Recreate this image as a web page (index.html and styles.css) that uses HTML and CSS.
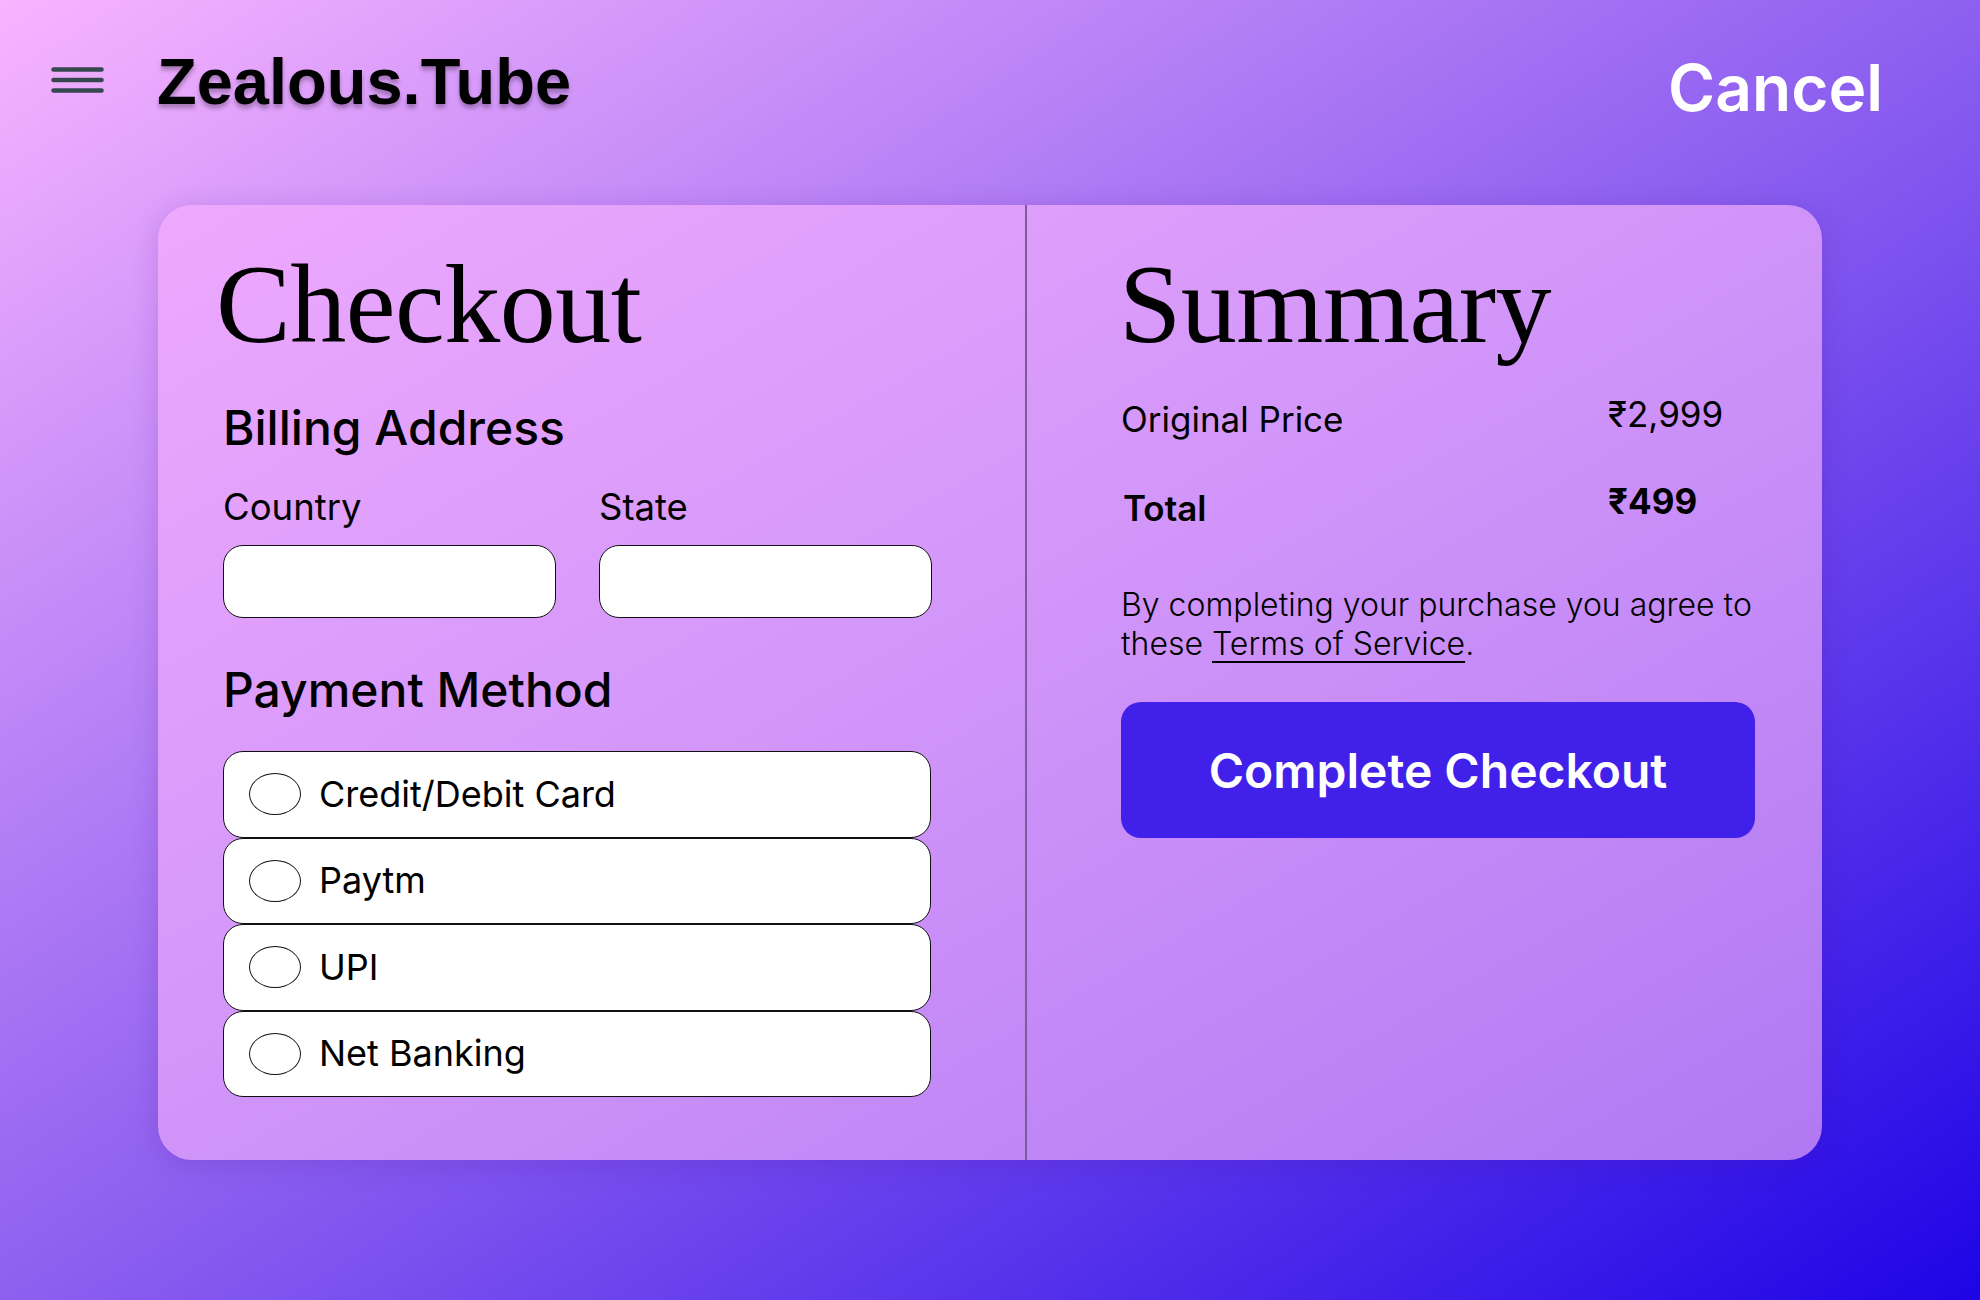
FILE: index.html
```html
<!DOCTYPE html>
<html lang="en">
<head>
<meta charset="utf-8">
<title>Zealous.Tube – Checkout</title>
<link rel="stylesheet" href="styles.css">
</head>
<body>
<header class="topbar">
  <button class="menu-btn" aria-label="Menu">
    <svg width="53" height="26" viewBox="0 0 53 26" aria-hidden="true">
      <g stroke="#37474f" stroke-width="4.5" stroke-linecap="round">
        <line x1="2.5" y1="2.5" x2="50.5" y2="2.5"/>
        <line x1="2.5" y1="13" x2="50.5" y2="13"/>
        <line x1="2.5" y1="23.5" x2="50.5" y2="23.5"/>
      </g>
    </svg>
  </button>
  <div class="logo">Zealous.Tube</div>
  <a class="cancel" href="#">Cancel</a>
</header>

<main class="card">
  <section class="panel panel-left">
    <h1 class="title title-checkout">Checkout</h1>
    <h2 class="section-title">Billing Address</h2>
    <div class="fields">
      <label class="field">
        <span class="field-label">Country</span>
        <input class="text-input" type="text">
      </label>
      <label class="field">
        <span class="field-label">State</span>
        <input class="text-input" type="text">
      </label>
    </div>
    <h2 class="section-title section-payment">Payment Method</h2>
    <div class="methods">
      <label class="method"><span class="radio"></span><span class="method-name">Credit/Debit Card</span></label>
      <label class="method"><span class="radio"></span><span class="method-name">Paytm</span></label>
      <label class="method"><span class="radio"></span><span class="method-name">UPI</span></label>
      <label class="method"><span class="radio"></span><span class="method-name">Net Banking</span></label>
    </div>
  </section>

  <section class="panel panel-right">
    <h1 class="title title-summary">Summary</h1>
    <div class="price-table">
      <div class="price-label">Original Price</div>
      <div class="price-value">₹2,999</div>
      <div class="price-label total">Total</div>
      <div class="price-value total">₹499</div>
    </div>
    <p class="terms">By completing your purchase you agree to these <a href="#" class="terms-link">Terms of Service</a>.</p>
    <button class="checkout-btn">Complete Checkout</button>
  </section>
</main>
</body>
</html>
```

FILE: styles.css
```css
html, body {
  margin: 0;
  padding: 0;
}

body {
  width: 1980px;
  height: 1300px;
  overflow: hidden;
  background: linear-gradient(to bottom right, #f8b4ff 0%, #8e60f0 50%, #1e04e6 100%);
  font-family: Inter, "Noto Sans", "DejaVu Sans", sans-serif;
  color: #000;
}

/* ---------- header ---------- */
.topbar {
  height: 205px;
  box-sizing: border-box;
  padding: 45px 97px 0 51px;
  display: flex;
  align-items: flex-start;
}

.menu-btn {
  margin: 22px 0 0 0;
  padding: 0;
  border: 0;
  background: none;
  width: 53px;
  height: 26px;
  display: block;
}

.menu-btn svg {
  display: block;
}

.logo {
  margin-left: 53px;
  font-family: "Liberation Sans", Arial, sans-serif;
  font-weight: 700;
  font-size: 65px;
  line-height: 1.15;
  text-shadow: 0 4px 4px rgba(0, 0, 0, 0.28);
}

.cancel {
  margin-left: auto;
  margin-top: 5px;
  font-family: Inter, sans-serif;
  font-weight: 600;
  font-size: 64px;
  line-height: 1.2;
  color: #fff;
  text-decoration: none;
}

/* ---------- card ---------- */
.card {
  margin-left: 158px;
  width: 1664px;
  height: 955px;
  border-radius: 34px;
  background: linear-gradient(to bottom right, #eea9fd 0%, #d094f9 50%, #b079f3 100%);
  box-shadow: 0 4px 28px rgba(70, 10, 140, 0.18);
  display: grid;
  grid-template-columns: 867px 1fr;
  overflow: hidden;
}

.panel {
  box-sizing: border-box;
}

.panel-left {
  padding: 43px 0 0 65px;
}

.panel-right {
  border-left: 2px solid #7a5c98;
  padding: 43px 66px 0 94px;
}

.title {
  margin: 0;
  font-family: "Liberation Serif", "Times New Roman", serif;
  font-weight: 400;
  font-size: 112px;
  line-height: 1;
  letter-spacing: -0.5px;
}

.title-checkout {
  margin-left: -7px;
}

.title-summary {
  margin-left: -2px;
}

.section-title {
  margin: 39px 0 0 0;
  font-family: Inter, sans-serif;
  font-weight: 500;
  font-size: 48px;
  line-height: 1.2;
}

.section-payment {
  margin-top: 43px;
}

.fields {
  margin-top: 30px;
  display: grid;
  grid-template-columns: 333px 333px;
  column-gap: 43px;
}

.field {
  display: flex;
  flex-direction: column;
}

.field-label {
  font-size: 36.5px;
  line-height: 1.15;
  font-weight: 400;
}

.text-input {
  margin-top: 16px;
  box-sizing: border-box;
  width: 333px;
  height: 73px;
  border: 1px solid #111;
  border-radius: 20px;
  background: #fff;
  padding: 0 20px;
  font: inherit;
  font-size: 30px;
  outline: none;
}

.methods {
  margin-top: 33px;
  width: 708px;
  display: flex;
  flex-direction: column;
}

.method {
  box-sizing: border-box;
  height: 86.5px;
  border: 1px solid #111;
  border-radius: 20px;
  background: #fff;
  display: flex;
  align-items: center;
  padding-left: 25px;
}

.radio {
  box-sizing: border-box;
  width: 52px;
  height: 42px;
  border: 1px solid #111;
  border-radius: 50%;
  background: #fff;
  flex: none;
}

.method-name {
  margin-left: 18px;
  font-size: 36px;
  font-weight: 400;
  line-height: 1.2;
}

/* ---------- summary ---------- */
.price-table {
  margin-top: 38px;
  display: grid;
  grid-template-columns: 487px auto;
  row-gap: 47px;
  font-size: 35px;
  line-height: 1.2;
}

.price-value {
  margin-top: -5px;
}

.price-value.total {
  margin-top: -7px;
}

.total {
  font-weight: 700;
}

.price-label.total {
  font-weight: 600;
  margin-left: 2px;
}

.terms {
  margin: 56px 0 0 0;
  font-size: 32px;
  font-weight: 300;
  line-height: 39px;
  width: 650px;
}

.terms-link {
  color: inherit;
  text-decoration: underline;
  text-decoration-thickness: 2px;
  text-underline-offset: 6px;
}

.checkout-btn {
  margin-top: 39px;
  width: 634px;
  height: 136px;
  border: 0;
  border-radius: 20px;
  background: #4121e9;
  color: #fff;
  font-family: Inter, sans-serif;
  font-weight: 600;
  font-size: 48px;
  display: block;
  cursor: pointer;
}
```
